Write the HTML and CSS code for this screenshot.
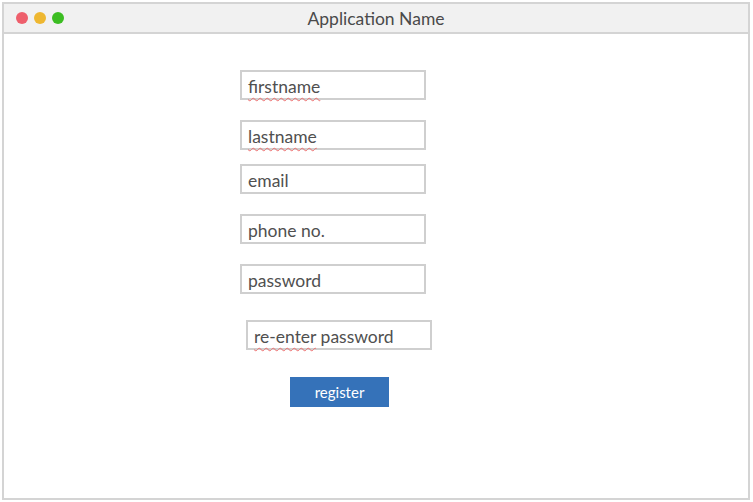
FILE: index.html
```html
<!DOCTYPE html>
<html>
<head>
<meta charset="utf-8">
<link rel="stylesheet" href="styles.css">
</head>
<body>
<div class="window">
  <div class="titlebar">
    <div class="lights">
      <span class="dot red"></span>
      <span class="dot yellow"></span>
      <span class="dot green"></span>
    </div>
    <div class="title">Application Name</div>
  </div>
  <div class="content">
    <div class="form">
      <div class="field f1"><span class="spell">firstname</span></div>
      <div class="field f2"><span class="spell">lastname</span></div>
      <div class="field f3">email</div>
      <div class="field f4">phone no.</div>
      <div class="field f5">password</div>
      <div class="field f6"><span class="spell">re-enter</span> password</div>
      <div class="button">register</div>
    </div>
  </div>
</div>
</body>
</html>
```
FILE: styles.css
```css
html, body {
  margin: 0;
  padding: 0;
  background: #ffffff;
}
body {
  font-family: Lato, "Open Sans", sans-serif;
  width: 753px;
  height: 502px;
  overflow: hidden;
}
.window {
  box-sizing: border-box;
  width: 748px;
  height: 498px;
  margin: 2px 0 0 2px;
  border: 2px solid #d4d4d4;
  display: flex;
  flex-direction: column;
}
.titlebar {
  height: 28px;
  border-bottom: 2px solid #d4d4d4;
  background: #f1f1f1;
  display: flex;
  align-items: center;
  position: relative;
}
.lights {
  display: flex;
  gap: 6px;
  padding-left: 12px;
}
.dot {
  width: 12px;
  height: 12px;
  border-radius: 50%;
  display: block;
}
.red { background: #ee5f6c; }
.yellow { background: #eeb731; }
.green { background: #3cbd22; }
.title {
  position: absolute;
  left: 0;
  right: 0;
  top: 0;
  bottom: 0;
  display: flex;
  align-items: center;
  justify-content: center;
  font-size: 17.5px;
  color: #4a4a4a;
}
.content {
  flex: 1;
}
.form {
  display: flex;
  flex-direction: column;
  align-items: flex-start;
  padding-left: 236px;
  padding-top: 36px;
}
.field {
  box-sizing: border-box;
  width: 186px;
  height: 30px;
  border: 2px solid #cfcfcf;
  padding-left: 6px;
  font-size: 17.5px;
  line-height: 29px;
  color: #505050;
  white-space: nowrap;
  overflow: visible;
}
.spell {
  text-decoration: underline wavy #ec6f6f;
  text-decoration-thickness: 1px;
  text-underline-offset: 4px;
}
.f2 { margin-top: 20px; }
.f3 { margin-top: 14px; }
.f4 { margin-top: 20px; }
.f5 { margin-top: 20px; }
.f6 { margin-top: 26px; margin-left: 6px; }
.button {
  margin-top: 27px;
  margin-left: 50px;
  width: 99px;
  height: 30px;
  background: #3572b9;
  color: #ffffff;
  font-size: 15px;
  line-height: 30px;
  text-align: center;
}
```
